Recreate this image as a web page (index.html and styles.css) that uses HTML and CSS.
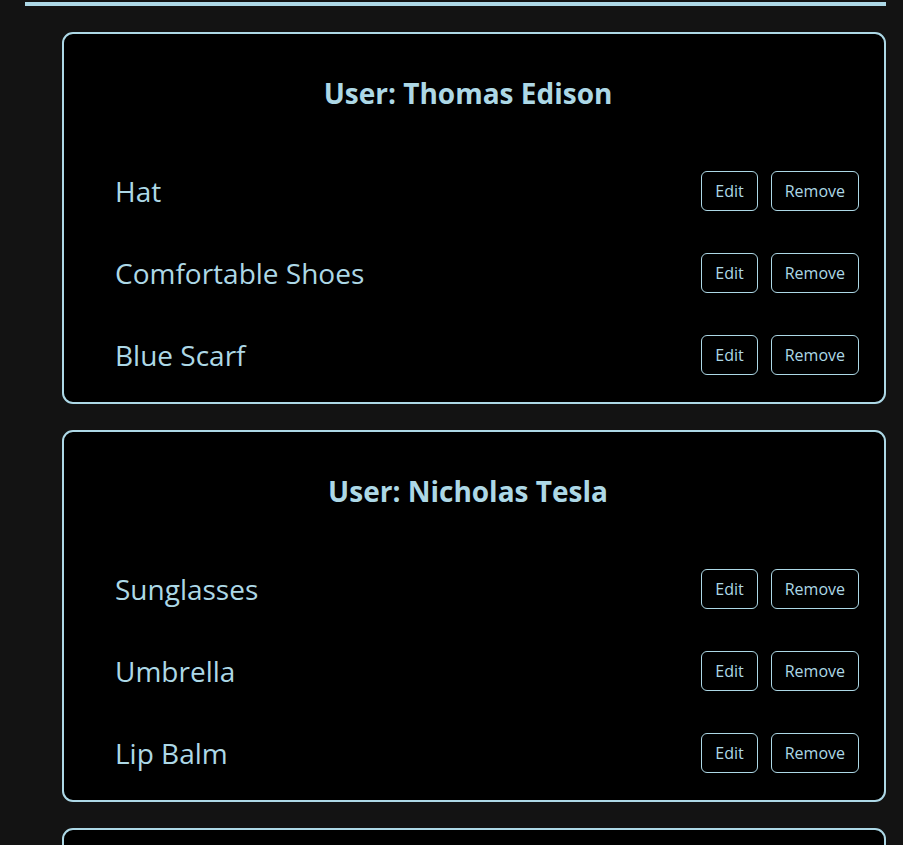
FILE: index.html
```html
<!DOCTYPE html>
<html lang="en">
<head>
<meta charset="utf-8">
<title>User Items</title>
<link rel="stylesheet" href="styles.css">
</head>
<body>
<div class="page">
  <div class="rule"></div>
  <section class="card">
    <h2 class="title">User: Thomas Edison</h2>
    <ul class="items">
      <li class="item"><span class="name">Hat</span><div class="actions"><button class="btn">Edit</button><button class="btn">Remove</button></div></li>
      <li class="item"><span class="name">Comfortable Shoes</span><div class="actions"><button class="btn">Edit</button><button class="btn">Remove</button></div></li>
      <li class="item"><span class="name">Blue Scarf</span><div class="actions"><button class="btn">Edit</button><button class="btn">Remove</button></div></li>
    </ul>
  </section>
  <section class="card">
    <h2 class="title">User: Nicholas Tesla</h2>
    <ul class="items">
      <li class="item"><span class="name">Sunglasses</span><div class="actions"><button class="btn">Edit</button><button class="btn">Remove</button></div></li>
      <li class="item"><span class="name">Umbrella</span><div class="actions"><button class="btn">Edit</button><button class="btn">Remove</button></div></li>
      <li class="item"><span class="name">Lip Balm</span><div class="actions"><button class="btn">Edit</button><button class="btn">Remove</button></div></li>
    </ul>
  </section>
  <section class="card card-partial"></section>
</div>
</body>
</html>
```
FILE: styles.css
```css
html, body {
  margin: 0;
  padding: 0;
  background: #131313;
  color: #add8e6;
  font-family: "Open Sans", "Noto Sans", sans-serif;
}

.page {
  padding: 2px 17px 0 25px;
}

.rule {
  height: 4px;
  background: #add8e6;
  margin-bottom: 26px;
}

.card {
  margin: 0 0 26px 37px;
  background: #000;
  border: 2px solid #add8e6;
  border-radius: 11px;
  padding: 41px 25px 6px 51px;
}

.card-partial {
  height: 120px;
  padding: 0;
}

.title {
  margin: 0 0 39px -26px;
  padding-right: 12px;
  text-align: center;
  font-size: 28px;
  line-height: 36px;
  font-weight: 700;
}

.items {
  list-style: none;
  margin: 0;
  padding: 0;
}

.item {
  height: 82px;
  display: flex;
  align-items: center;
  justify-content: space-between;
}

.name {
  font-size: 28px;
}

.actions {
  display: flex;
  gap: 13px;
}

.btn {
  height: 40px;
  padding: 0 13px;
  background: #000;
  color: #add8e6;
  border: 1px solid #add8e6;
  border-radius: 6px;
  font-family: "Open Sans", "Noto Sans", sans-serif;
  font-size: 16px;
  cursor: pointer;
}
```
